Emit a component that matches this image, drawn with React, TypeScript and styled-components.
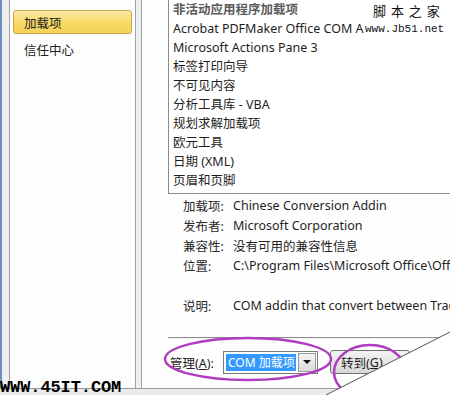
import React from "react";
import styled, { createGlobalStyle } from "styled-components";

const Global = createGlobalStyle`
  html, body { margin: 0; padding: 0; background: #fff; }
  body { font-family: "Noto Sans", "Noto Sans CJK SC", sans-serif; }
`;

const FONT = `"Noto Sans", "Noto Sans CJK SC", sans-serif`;

const Frame = styled.div`
  position: relative;
  width: 450px;
  height: 395px;
  overflow: hidden;
  display: flex;
  flex-direction: column;
  background: #eeeff1;
  font-family: ${FONT};
  font-size: 12px;
  color: #1e1e1e;
`;

const Main = styled.div`
  display: flex;
  height: 389px;
  flex-shrink: 0;
  border-bottom: 1px solid #9a9a9a;
  box-sizing: border-box;
`;

const BlueEdge = styled.div`
  width: 2px;
  flex-shrink: 0;
  background: #6f8fbf;
`;

const Nav = styled.div`
  margin-left: 7px;
  width: 127px;
  flex-shrink: 0;
  box-sizing: border-box;
  border-left: 1px solid #a3a3a3;
  border-right: 1px solid #a3a3a3;
  background: #fdfdfd;
  padding: 10px 3px 0 3px;
  display: flex;
  flex-direction: column;
  gap: 3px;
`;

const NavItem = styled.div<{ $active?: boolean }>`
  height: 24px;
  box-sizing: border-box;
  display: flex;
  align-items: center;
  padding-left: 10px;
  font-size: 12.5px;
  border-radius: 3px;
  white-space: nowrap;
  border: 1px solid ${(p) => (p.$active ? "#c9a84c" : "transparent")};
  background: ${(p) =>
    p.$active ? "linear-gradient(#fbeaa6, #f7d964 55%, #f5d15a)" : "transparent"};
  color: #222;
`;

const Gap = styled.div`
  width: 5px;
  flex-shrink: 0;
`;

const Content = styled.div`
  flex: 1;
  min-width: 0;
  overflow: hidden;
  border-left: 1px solid #a3a3a3;
  background: #fefefe;
  display: flex;
  flex-direction: column;
`;

const ListBox = styled.div`
  margin-left: 26px;
  height: 194px;
  box-sizing: border-box;
  border: 1px solid #8c8c8c;
  border-top: none;
  border-right: none;
  padding: 0 0 3px 4px;
  display: flex;
  flex-direction: column;
  background: #fff;
`;

const ListRow = styled.div<{ $header?: boolean }>`
  height: 19px;
  line-height: 19px;
  white-space: nowrap;
  font-size: 12.5px;
  font-weight: ${(p) => (p.$header ? 700 : 400)};
  color: ${(p) => (p.$header ? "#5c5c5c" : "#1e1e1e")};
`;

const ClippedText = styled.span`
  display: inline-block;
  max-width: 191px;
  overflow: hidden;
  vertical-align: top;
`;

const Details = styled.div`
  margin-left: 41px;
  margin-top: 1px;
  display: grid;
  grid-template-columns: 50px 1fr;
  grid-auto-rows: 20px;
  align-items: center;
  white-space: nowrap;
  font-size: 12.5px;
`;

const Label = styled.div`
  color: #2a2a2a;
`;

const Value = styled.div`
  color: #1e1e1e;
`;

const Separator = styled.div`
  margin-left: 26px;
  margin-top: 22px;
  border-top: 1px solid #8f8f8f;
  border-bottom: 1px solid #f4f4f4;
`;

const Controls = styled.div`
  margin-left: 28px;
  margin-top: 11px;
  display: flex;
  align-items: center;
  font-size: 12.5px;
`;

const ManageLabel = styled.span`
  width: 53px;
  flex-shrink: 0;
  white-space: nowrap;
  u { text-decoration: underline; }
`;

const Combo = styled.div`
  width: 95px;
  height: 23px;
  flex-shrink: 0;
  box-sizing: border-box;
  border: 1px solid #7a7a7a;
  background: #fff;
  display: flex;
  align-items: stretch;
  padding: 1px;
`;

const ComboText = styled.div`
  flex: 1;
  background: #3399ff;
  color: #fff;
  display: flex;
  align-items: center;
  padding-left: 2px;
  margin: 1px 2px 1px 1px;
  font-size: 12px;
  white-space: nowrap;
  overflow: hidden;
`;

const ComboButton = styled.div`
  width: 16px;
  flex-shrink: 0;
  border: 1px solid #9a9a9a;
  background: linear-gradient(#f4f4f4, #dadada);
  display: flex;
  align-items: center;
  justify-content: center;
`;

const Arrow = styled.div`
  width: 0;
  height: 0;
  border-left: 4px solid transparent;
  border-right: 4px solid transparent;
  border-top: 4px solid #111;
`;

const GoButton = styled.div`
  margin-left: 12px;
  width: 80px;
  height: 24px;
  flex-shrink: 0;
  box-sizing: border-box;
  border: 1px solid #707070;
  border-radius: 3px;
  background: linear-gradient(#f3f3f3, #e6e6e6 50%, #d8d8d8);
  display: flex;
  align-items: center;
  padding-left: 10px;
  white-space: nowrap;
  u { text-decoration: underline; }
`;

const BottomStrip = styled.div`
  flex: 1;
  background: #ebebeb;
`;

const WatermarkTop = styled.div`
  position: absolute;
  left: 364px;
  top: 2px;
  width: 86px;
  background: #fff;
  display: flex;
  flex-direction: column;
  align-items: flex-start;
  z-index: 2;
`;

const WmCn = styled.div`
  font-family: "Noto Sans CJK SC", sans-serif;
  font-size: 13px;
  line-height: 18px;
  margin-left: 9px;
  letter-spacing: 1px;
  color: #111;
`;

const WmEn = styled.div`
  font-family: "Liberation Mono", "DejaVu Sans Mono", monospace;
  font-size: 11px;
  line-height: 18px;
  margin-left: 1px;
  color: #111;
`;

const WatermarkBottom = styled.div`
  position: absolute;
  left: 0px;
  top: 380px;
  font-family: "Liberation Mono", monospace;
  font-weight: 700;
  font-size: 17px;
  line-height: 15px;
  color: #000;
  letter-spacing: -0.1px;
  z-index: 2;
`;

const Overlay = styled.svg`
  position: absolute;
  left: 0;
  top: 0;
  pointer-events: none;
  z-index: 1;
`;

const items = [
  "Microsoft Actions Pane 3",
  "标签打印向导",
  "不可见内容",
  "分析工具库 - VBA",
  "规划求解加载项",
  "欧元工具",
  "日期 (XML)",
  "页眉和页脚",
];

const details: [string, string][] = [
  ["加载项:", "Chinese Conversion Addin"],
  ["发布者:", "Microsoft Corporation"],
  ["兼容性:", "没有可用的兼容性信息"],
  ["位置:", "C:\\Program Files\\Microsoft Office\\Office14\\ADDINS\\TCSCCONV.DLL"],
  ["", ""],
  ["说明:", "COM addin that convert between Traditional and Simplified Chinese"],
];

export default function App() {
  return (
    <Frame>
      <Global />
      <Main>
        <BlueEdge />
        <Nav>
          <NavItem $active>加载项</NavItem>
          <NavItem>信任中心</NavItem>
        </Nav>
        <Gap />
        <Content>
          <ListBox>
            <ListRow $header>非活动应用程序加载项</ListRow>
            <ListRow>
              <ClippedText>Acrobat PDFMaker Office COM Add-in</ClippedText>
            </ListRow>
            {items.map((t) => (
              <ListRow key={t}>{t}</ListRow>
            ))}
          </ListBox>
          <Details>
            {details.map(([l, v], i) => (
              <React.Fragment key={i}>
                <Label>{l}</Label>
                <Value>{v}</Value>
              </React.Fragment>
            ))}
          </Details>
          <Separator />
          <Controls>
            <ManageLabel>
              管理(<u>A</u>):
            </ManageLabel>
            <Combo>
              <ComboText>COM 加载项</ComboText>
              <ComboButton>
                <Arrow />
              </ComboButton>
            </Combo>
            <GoButton>
              转到(<u>G</u>)
            </GoButton>
          </Controls>
        </Content>
      </Main>
      <BottomStrip />
      <WatermarkTop>
        <WmCn>脚 本 之 家</WmCn>
        <WmEn>www.Jb51.net</WmEn>
      </WatermarkTop>
      <WatermarkBottom>WWW.45IT.COM</WatermarkBottom>
      <Overlay width="450" height="395" viewBox="0 0 450 395">
        <ellipse cx="248" cy="359" rx="83" ry="21" fill="none" stroke="#b03cc0" strokeWidth="2.5" />
        <ellipse cx="370" cy="372" rx="36" ry="27" fill="none" stroke="#b03cc0" strokeWidth="2.5" />
        <polygon points="450,332 450,395 326,395" fill="#ffffff" />
        <line x1="450" y1="332" x2="326" y2="395" stroke="#555" strokeWidth="1" />
      </Overlay>
    </Frame>
  );
}
